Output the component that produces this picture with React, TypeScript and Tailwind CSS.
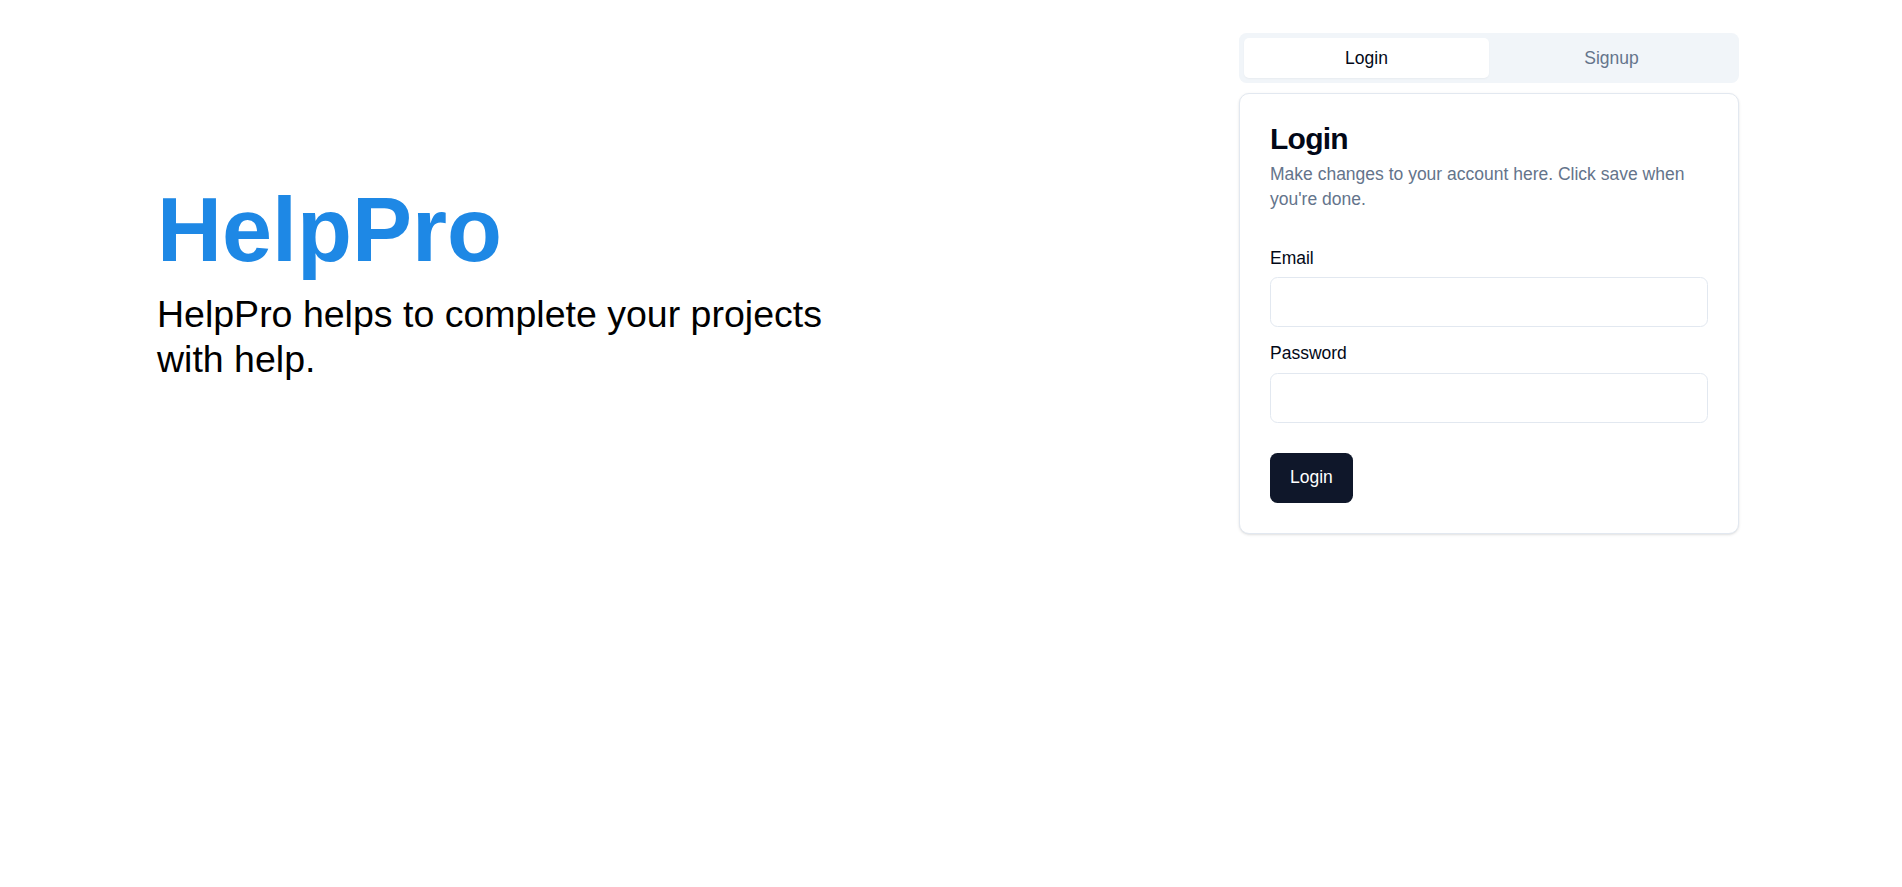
import { useState } from "react";

const App = () => {
  const [tab, setTab] = useState<"login" | "signup">("login");

  return (
    <div className="flex min-h-screen items-start justify-between bg-white pl-[157px] pr-[163px] pt-[33px] font-['Liberation_Sans',Arial,sans-serif] text-[#020817]">
      <div className="mt-[152px] w-[700px]">
        <h1 className="text-[90px] font-bold leading-none text-[#1e88e5]">HelpPro</h1>
        <p className="mt-[17px] text-[37.5px] leading-[45px] text-black">
          HelpPro helps to complete your projects with help.
        </p>
      </div>

      <div className="w-[500px]">
        <div className="grid h-[50px] grid-cols-2 rounded-[7.5px] bg-[#f1f5f9] p-[5px]">
          <button
            onClick={() => setTab("login")}
            className={`rounded-[5px] text-[17.5px] ${
              tab === "login" ? "bg-white text-[#020817] shadow-[0_1px_2px_rgba(0,0,0,0.04)]" : "text-[#64748b]"
            }`}
          >
            Login
          </button>
          <button
            onClick={() => setTab("signup")}
            className={`rounded-[5px] text-[17.5px] ${
              tab === "signup" ? "bg-white text-[#020817] shadow-[0_1px_2px_rgba(0,0,0,0.04)]" : "text-[#64748b]"
            }`}
          >
            Signup
          </button>
        </div>

        <div className="mt-[10px] rounded-[10px] border border-[#e2e8f0] bg-white shadow-sm">
          <div className="p-[30px]">
            <h2 className="text-[30px] font-semibold leading-none tracking-tight">Login</h2>
            <p className="mt-[7.5px] text-[17.5px] leading-[25px] text-[#64748b]">
              Make changes to your account here. Click save when you're done.
            </p>
          </div>

          <div className="px-[30px] pb-[30px] pt-[8px]">
            <label className="block text-[17.5px] leading-none">Email</label>
            <input
              type="email"
              className="mt-[10px] block h-[50px] w-full rounded-[7.5px] border border-[#e2e8f0] px-[15px] text-[17.5px] outline-none"
            />
            <label className="mt-[18px] block text-[17.5px] leading-none">Password</label>
            <input
              type="password"
              className="mt-[10px] block h-[50px] w-full rounded-[7.5px] border border-[#e2e8f0] px-[15px] text-[17.5px] outline-none"
            />
          </div>

          <div className="px-[30px] pb-[30px]">
            <button className="h-[50px] rounded-[7.5px] bg-[#0f172a] px-[20px] text-[17.5px] font-medium text-white">
              Login
            </button>
          </div>
        </div>
      </div>
    </div>
  );
};

export default App;
